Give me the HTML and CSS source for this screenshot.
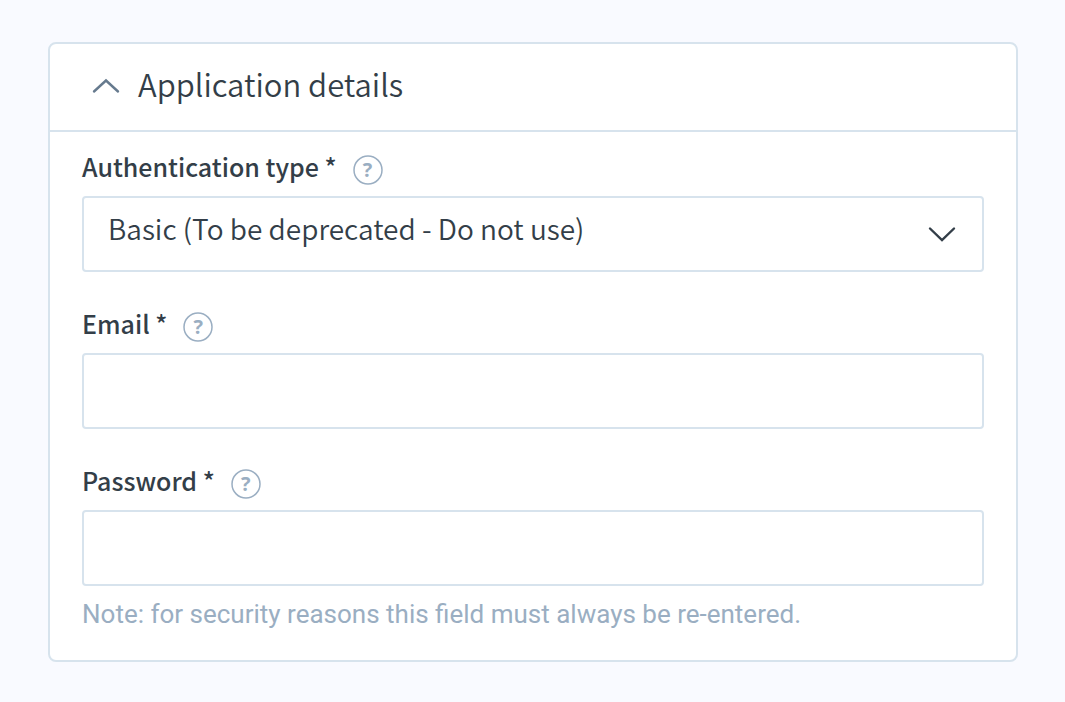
FILE: index.html
```html
<!DOCTYPE html>
<html lang="en">
<head>
<meta charset="utf-8">
<meta name="viewport" content="width=device-width, initial-scale=1">
<title>Application details</title>
<link rel="stylesheet" href="styles.css">
</head>
<body>
<form class="card">
  <h2 class="card-title">
    <button class="card-toggle" type="button" aria-expanded="true" aria-controls="details">
      <svg class="chevron" viewBox="0 0 28 16" aria-hidden="true"><path d="M2 13.5 14 2.5l12 11"/></svg>
      <span class="card-name">Application details</span>
    </button>
  </h2>
  <div class="card-body" id="details">
    <div class="field">
      <div class="field-head">
        <label class="label" for="auth">Authentication type *</label>
        <button class="help" type="button" aria-label="Help: authentication type"><svg class="ring" viewBox="0 0 30 30" aria-hidden="true"><circle cx="15" cy="15" r="14"/></svg><span class="mark">?</span></button>
      </div>
      <div class="select-wrap">
        <select class="control select" id="auth" required>
          <option>Basic (To be deprecated - Do not use)</option>
        </select>
        <svg class="chevron arrow" viewBox="0 0 28 16" aria-hidden="true"><path d="M2 2.5l12 11.5L26 2.5"/></svg>
      </div>
    </div>
    <div class="field">
      <div class="field-head">
        <label class="label" for="email">Email *</label>
        <button class="help" type="button" aria-label="Help: email"><svg class="ring" viewBox="0 0 30 30" aria-hidden="true"><circle cx="15" cy="15" r="14"/></svg><span class="mark">?</span></button>
      </div>
      <input class="control" id="email" type="email" required>
    </div>
    <div class="field">
      <div class="field-head">
        <label class="label" for="password">Password *</label>
        <button class="help" type="button" aria-label="Help: password"><svg class="ring" viewBox="0 0 30 30" aria-hidden="true"><circle cx="15" cy="15" r="14"/></svg><span class="mark">?</span></button>
      </div>
      <input class="control" id="password" type="password" aria-describedby="note" required>
      <p class="note" id="note">Note: for security reasons this field must always be re-entered.</p>
    </div>
  </div>
</form>
</body>
</html>
```

FILE: styles.css
```css
* {
  box-sizing: border-box;
}

body {
  margin: 0;
  padding: 42px 47px 40px 48px;
  background: #f9faff;
  color: #333e48;
  font-family: "Noto Sans CJK SC", "Noto Sans", sans-serif;
}

button,
input,
select {
  font-family: inherit;
  color: inherit;
}

.card {
  background: #fff;
  border: 2px solid #d7e3ed;
  border-radius: 8px;
}

.card-title {
  margin: 0;
  border-bottom: 2px solid #d7e3ed;
}

.card-toggle {
  display: flex;
  align-items: center;
  gap: 18px;
  width: 100%;
  padding: 20px 42px 22px;
  border: 0;
  background: none;
  font-size: 31px;
  font-weight: 350;
  line-height: 40px;
  text-align: left;
}

.card-name {
  padding-bottom: 4px;
}

.chevron {
  width: 28px;
  height: 16px;
  fill: none;
  stroke: #667a8e;
  stroke-width: 2.4;
  stroke-linecap: round;
}

.card-body {
  display: flex;
  flex-direction: column;
  gap: 40px;
  padding: 23px 32px 30px;
}

.field {
  display: flex;
  flex-direction: column;
}

.field-head {
  display: flex;
  align-items: center;
  gap: 16px;
  margin-bottom: 11px;
}

.label {
  font-size: 25px;
  font-weight: 500;
  line-height: 22px;
  padding-bottom: 8px;
}

.help {
  display: grid;
  place-items: center;
  width: 30px;
  height: 30px;
  padding: 0;
  border: 0;
  background: none;
  color: #9aaec2;
  font-family: "Open Sans", sans-serif;
  font-size: 20px;
  font-weight: 700;
  line-height: 30px;
}

.ring,
.mark {
  grid-area: 1 / 1;
}

.ring {
  width: 30px;
  height: 30px;
  fill: none;
  stroke: #9aaec2;
  stroke-width: 1.5;
}

.select-wrap {
  display: grid;
  align-items: center;
}

.select-wrap > * {
  grid-area: 1 / 1;
}

.control {
  width: 100%;
  height: 76px;
  padding: 0 24px;
  border: 2px solid #d7e3ed;
  border-radius: 4px;
  background: #fff;
  font-size: 28px;
}

.select {
  appearance: none;
  padding-bottom: 12px;
  font-weight: 350;
}

.arrow {
  justify-self: end;
  margin-right: 28px;
  stroke: #333e48;
  pointer-events: none;
}

.note {
  margin: 12px 0 0;
  color: #9aaec2;
  font-family: Roboto, sans-serif;
  font-size: 26px;
  line-height: 32px;
}
```
